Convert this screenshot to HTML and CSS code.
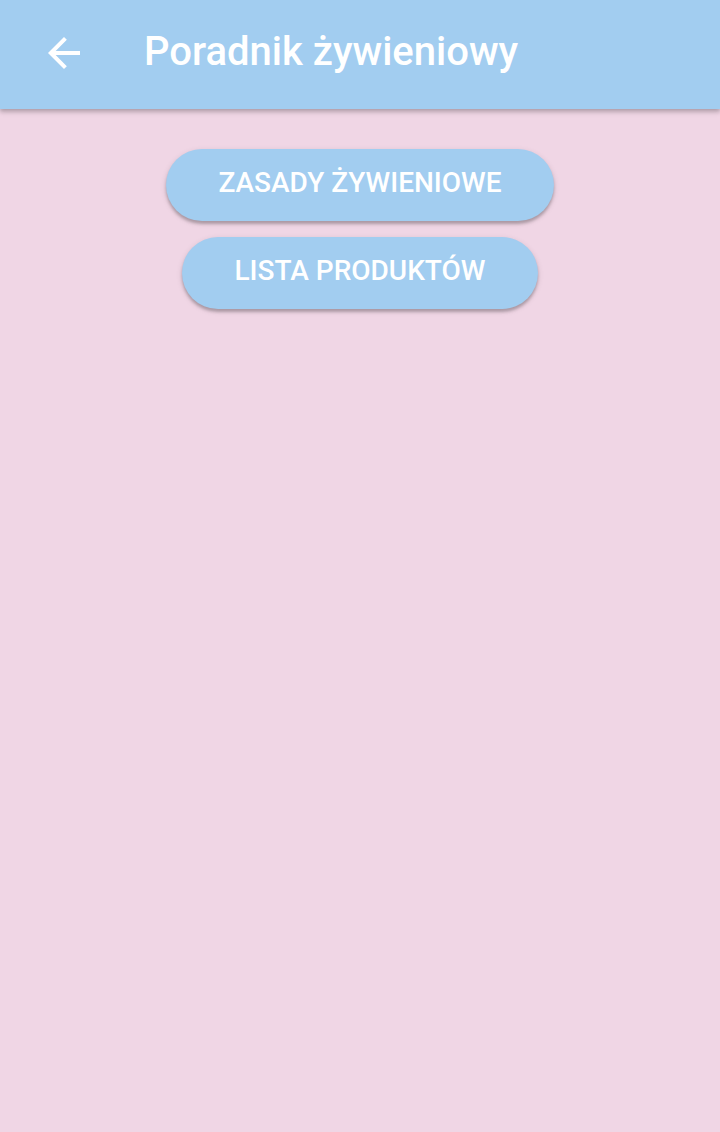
FILE: index.html
```html
<!DOCTYPE html>
<html lang="pl">
<head>
<meta charset="utf-8">
<title>Poradnik żywieniowy</title>
<link rel="stylesheet" href="styles.css">
</head>
<body>
<header class="appbar">
  <button class="back" aria-label="Wstecz">
    <svg width="48" height="48" viewBox="0 0 24 24"><path d="M20 11H7.83l5.59-5.59L12 4l-8 8 8 8 1.41-1.41L7.83 13H20v-2z" fill="#fff"/></svg>
  </button>
  <h1 class="title">Poradnik żywieniowy</h1>
</header>
<main class="content">
  <button class="pill">ZASADY ŻYWIENIOWE</button>
  <button class="pill">LISTA PRODUKTÓW</button>
</main>
</body>
</html>
```
FILE: styles.css
```css
html, body {
  margin: 0;
  padding: 0;
  height: 100%;
}
body {
  background: #f0d6e5;
  font-family: Roboto, "Noto Sans", sans-serif;
}
.appbar {
  box-sizing: border-box;
  height: 109px;
  padding-bottom: 3px;
  background: #a2cdf0;
  display: flex;
  align-items: center;
  box-shadow: 0 2px 4px rgba(0,0,0,0.2), 0 4px 5px rgba(0,0,0,0.1);
  position: relative;
}
.back {
  width: 48px;
  height: 48px;
  margin-left: 40px;
  padding: 0;
  border: 0;
  background: none;
  display: flex;
}
.title {
  margin: 0 0 2px 56px;
  color: #fff;
  font-size: 40px;
  font-weight: 500;
  line-height: 1;
}
.content {
  display: flex;
  flex-direction: column;
  align-items: center;
  gap: 16px;
  padding-top: 40px;
}
.pill {
  box-sizing: border-box;
  height: 72px;
  padding: 0 52px 6px;
  border: 0;
  border-radius: 36px;
  background: #a2cdf0;
  color: #fff;
  font-family: Roboto, "Noto Sans", sans-serif;
  font-size: 28px;
  font-weight: 500;
  box-shadow: 0 3px 3px rgba(0,0,0,0.22), 0 2px 6px rgba(0,0,0,0.12);
}
```
